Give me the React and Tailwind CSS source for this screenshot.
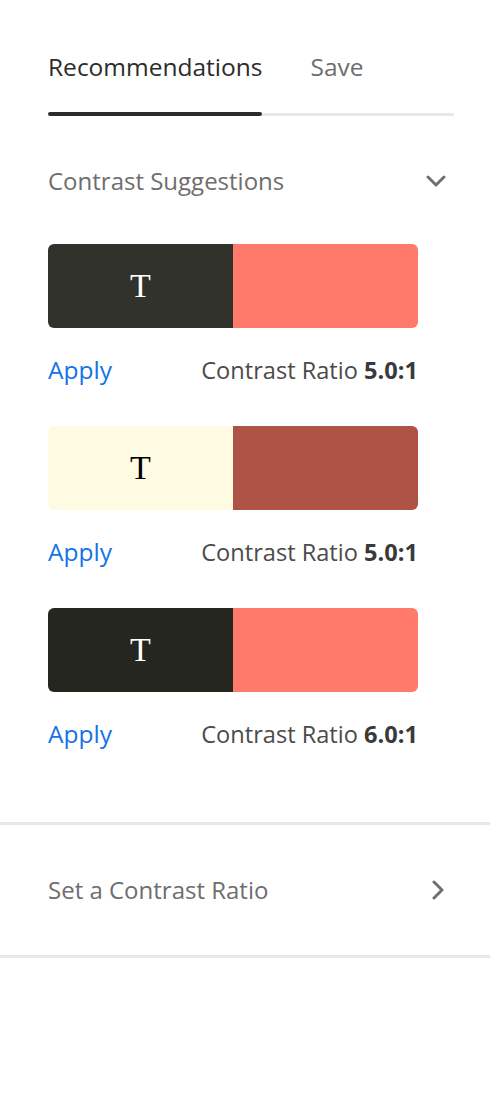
import React from "react";

const suggestions = [
  { fg: "bg-[#32322d]", text: "text-white", bg: "bg-[#ff7a6a]", ratio: "5.0:1" },
  { fg: "bg-[#fffbe3]", text: "text-black", bg: "bg-[#ad5447]", ratio: "5.0:1" },
  { fg: "bg-[#262621]", text: "text-white", bg: "bg-[#ff7a6a]", ratio: "6.0:1" },
];

function Swatch({ item }) {
  return (
    <div className="flex h-[84px] w-[370px] overflow-hidden rounded-md">
      <div className={`flex w-[185px] items-center justify-center ${item.fg}`}>
        <span className={`text-[34px] leading-none ${item.text}`} style={{ fontFamily: '"Liberation Serif", serif' }}>
          T
        </span>
      </div>
      <div className={`flex-1 ${item.bg}`} />
    </div>
  );
}

export default function App() {
  return (
    <div className="min-h-[1098px] w-[490px] bg-white" style={{ fontFamily: '"Open Sans", sans-serif' }}>
      <div className="pl-12">
        <div className="w-[406px] pt-[52px]">
          <div className="flex items-center gap-[48px] text-[24.5px] leading-[30px]">
            <span className="text-[#2c2c2c]">Recommendations</span>
            <span className="text-[#6e6e6e]">Save</span>
          </div>
          <div className="mt-[30px] flex items-center">
            <div className="h-1 w-[214px] rounded-full bg-[#2c2c2c]" />
            <div className="h-[3px] flex-1 bg-[#e8e8e8]" />
          </div>
        </div>

        <div className="mt-[50px] flex w-[398px] items-center justify-between">
          <span className="text-[24px] leading-[30px] text-[#6e6e6e]">Contrast Suggestions</span>
          <svg width="20" height="12" viewBox="0 0 20 12" fill="none">
            <path d="M2 2l8 8 8-8" stroke="#707070" strokeWidth="3" strokeLinecap="round" strokeLinejoin="round" />
          </svg>
        </div>

        <div className="mt-[48px]">
          {suggestions.map((item, i) => (
            <div key={i} className={i > 0 ? "mt-[41px]" : ""}>
              <Swatch item={item} />
              <div className="mt-[27px] flex w-[370px] items-center justify-between text-[23.6px] leading-[30px]">
                <span className="text-[24.5px] text-[#1473e6]">Apply</span>
                <span className="text-[#4b4b4b]">
                  Contrast Ratio <span className="font-bold text-[#3a3a3a]">{item.ratio}</span>
                </span>
              </div>
            </div>
          ))}
        </div>
      </div>

      <div className="mt-[73px] h-[3px] bg-[#e8e8e8]" />
      <div className="flex items-center justify-between py-[50px] pl-12">
        <span className="text-[24px] leading-[30px] text-[#6e6e6e]">Set a Contrast Ratio</span>
        <svg className="mr-[45px]" width="14" height="20" viewBox="0 0 14 20" fill="none">
          <path d="M3 2l8 8-8 8" stroke="#707070" strokeWidth="3" strokeLinecap="round" strokeLinejoin="round" />
        </svg>
      </div>
      <div className="h-[3px] bg-[#e8e8e8]" />
    </div>
  );
}
